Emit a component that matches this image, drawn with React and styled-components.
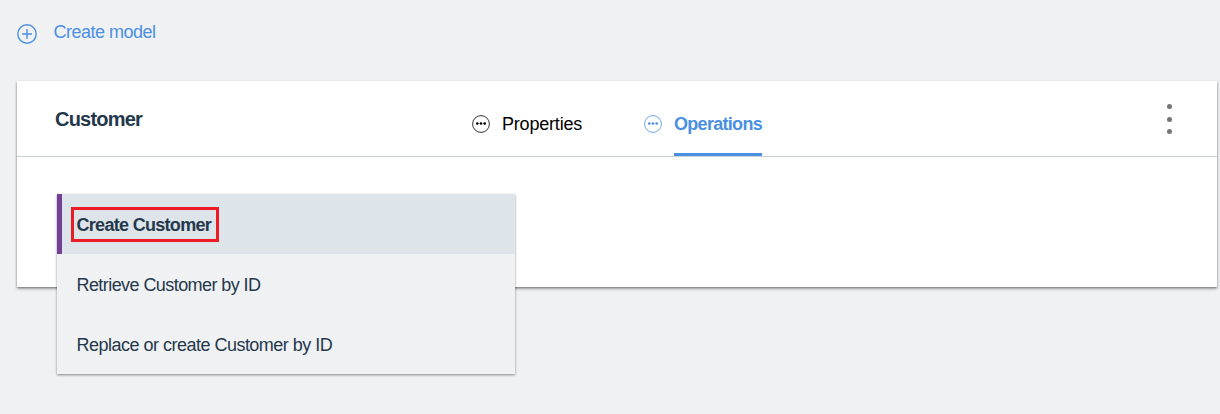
import React from "react";
import styled, { createGlobalStyle } from "styled-components";

const GlobalStyle = createGlobalStyle`
  * { box-sizing: border-box; }
  body {
    margin: 0;
    background: #f0f1f3;
    font-family: "Liberation Sans", Arial, sans-serif;
    font-size: 18px;
    color: #24384b;
    overflow: hidden;
  }
`;

const Page = styled.main`
  height: 414px;
  padding: 0 3px 0 17px;
`;

const CreateModel = styled.a`
  display: flex;
  align-items: center;
  gap: 16.5px;
  height: 81px;
  padding-bottom: 14px;
  color: #4a90e2;
  letter-spacing: -0.5px;
  line-height: 20px;
  svg { display: block; }
`;

const CreateLabel = styled.span`
  margin-top: -3px;
`;

const Card = styled.section`
  height: 206px;
  background: #fff;
  box-shadow: 0 1px 2px rgba(0, 0, 0, 0.35), 0 2px 3px rgba(0, 0, 0, 0.25);
`;

const CardHeader = styled.header`
  display: flex;
  height: 76px;
  border-bottom: 1px solid #c8d2d2;
  padding: 0 45px 0 38px;
`;

const Title = styled.h2`
  width: 417px;
  margin: 0;
  font-size: 20px;
  line-height: 77px;
  letter-spacing: -0.8px;
`;

const Tab = styled.div`
  display: flex;
  gap: 12px;
  margin-right: 62px;
  color: ${(p) => (p.$active ? "#4a90e2" : "#000")};
  font-weight: ${(p) => (p.$active ? 700 : 400)};
  letter-spacing: ${(p) => (p.$active ? "-0.7px" : "-0.2px")};
  svg { margin-top: 34px; }
`;

const TabLabel = styled.span`
  width: ${(p) => p.$width}px;
  height: 75px;
  padding-top: 11px;
  line-height: 64px;
  white-space: nowrap;
  border-bottom: 3px solid ${(p) => (p.$active ? "#4a90e2" : "transparent")};
`;

const Kebab = styled.div`
  display: flex;
  flex-direction: column;
  gap: 7px;
  margin: 23px 0 0 auto;
`;

const Dot = styled.i`
  width: 5px;
  height: 5px;
  border-radius: 50%;
  background: #757575;
  &:first-child { margin-bottom: 1px; }
`;

const Operations = styled.ul`
  width: 458px;
  margin: 37px 0 0 40px;
  padding: 0;
  list-style: none;
  background: #f0f1f3;
  box-shadow: 0 1px 2px rgba(0, 0, 0, 0.32), 0 1px 3px rgba(0, 0, 0, 0.15);
`;

const Operation = styled.li`
  display: flex;
  align-items: center;
  height: 60px;
  padding-top: ${(p) => (p.$selected ? 0 : 2)}px;
  padding-left: ${(p) => (p.$selected ? 9 : 19.5)}px;
  border-left: ${(p) => (p.$selected ? "5px solid #734098" : "0")};
  background: ${(p) => (p.$selected ? "#dde4ea" : "transparent")};
  font-weight: ${(p) => (p.$selected ? 700 : 400)};
  letter-spacing: ${(p) => p.$spacing}px;
  line-height: 22px;
`;

const Highlight = styled.span`
  display: block;
  width: 148px;
  height: 35px;
  padding-left: 2.5px;
  border: 3px solid #ed1c24;
  line-height: 30px;
  white-space: nowrap;
`;

const MoreIcon = () => (
  <svg width="18" height="19" viewBox="0 0 18 19" fill="currentColor">
    <circle cx="9" cy="9" r="8.4" fill="none" stroke="currentColor" strokeWidth="0.8" />
    <circle cx="5.3" cy="8.5" r="1.35" />
    <circle cx="9" cy="8.5" r="1.35" />
    <circle cx="12.7" cy="8.5" r="1.35" />
  </svg>
);

export default function App() {
  return (
    <>
      <GlobalStyle />
      <Page>
        <CreateModel>
          <svg width="20" height="20" viewBox="0 0 20 20" fill="none" stroke="currentColor" strokeWidth="1.4">
            <circle cx="10" cy="10" r="9.2" />
            <path d="M10 5v10M5 10h10" />
          </svg>
          <CreateLabel>Create model</CreateLabel>
        </CreateModel>
        <Card>
          <CardHeader>
            <Title>Customer</Title>
            <Tab>
              <MoreIcon />
              <TabLabel $width={80}>Properties</TabLabel>
            </Tab>
            <Tab $active>
              <MoreIcon />
              <TabLabel $active $width={88}>Operations</TabLabel>
            </Tab>
            <Kebab>
              <Dot /><Dot /><Dot />
            </Kebab>
          </CardHeader>
          <Operations>
            <Operation $selected $spacing={-0.7}>
              <Highlight>Create Customer</Highlight>
            </Operation>
            <Operation $spacing={-0.57}>Retrieve Customer by ID</Operation>
            <Operation $spacing={-0.51}>Replace or create Customer by ID</Operation>
          </Operations>
        </Card>
      </Page>
    </>
  );
}
